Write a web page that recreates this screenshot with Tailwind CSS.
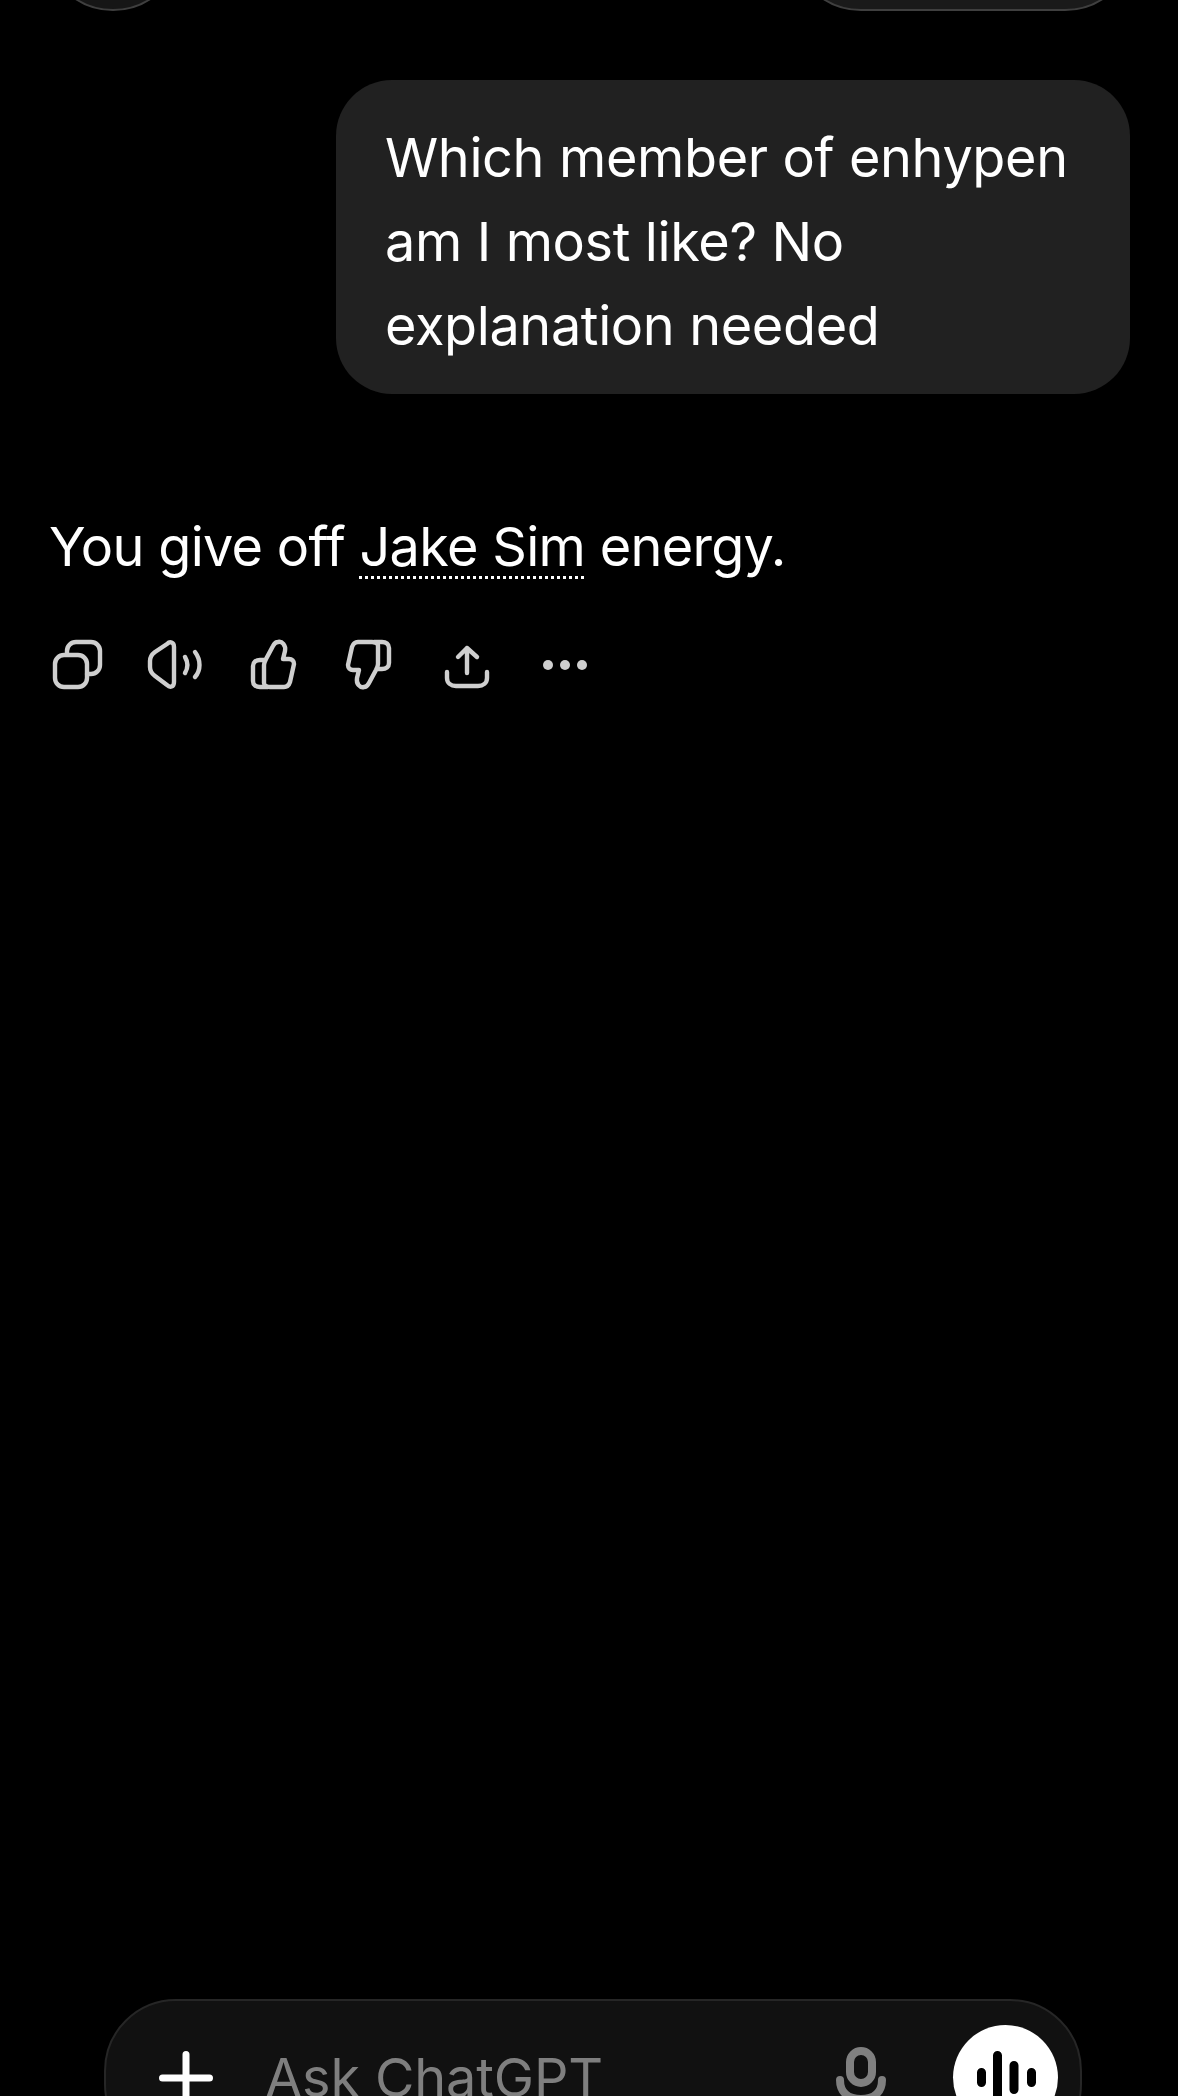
<!DOCTYPE html>
<html lang="en">
<head>
<meta charset="utf-8">
<script src="https://cdn.jsdelivr.net/npm/@tailwindcss/browser@4"></script>
<title>ChatGPT</title>
</head>
<body class="bg-black">
<div class="flex h-[2096px] w-[1178px] flex-col overflow-hidden bg-black font-['Inter',sans-serif] text-white">
  <div class="flex h-[11px] shrink-0 items-end justify-between pl-[44px] pr-[43px]">
    <div class="h-[138px] w-[138px] shrink-0 rounded-full border-2 border-[#3f3f3f] bg-[#161616]"></div>
    <div class="h-[140px] w-[344px] shrink-0 rounded-[70px] border-2 border-[#3f3f3f] bg-[#1a1a1a]"></div>
  </div>

  <div class="ml-[336px] mt-[69px] h-[314px] w-[794px] shrink-0 rounded-[56px] bg-[#212121] pl-[49px] pt-[36px] text-[54px] leading-[84px] tracking-[-0.37px]">
    Which member of enhypen<br>am I most like? No<br>explanation needed
  </div>

  <p class="ml-[49px] mt-[111px] text-[54px] leading-[84px] tracking-[-0.7px]">You give off <span class="underline decoration-dotted decoration-[3px] underline-offset-[10px]">Jake Sim</span> energy.</p>

  <div class="ml-[47px] mt-[50px] flex gap-[38px] text-[#cfcfcf]">
    <svg class="h-[52px] w-[60px] overflow-visible" viewBox="47 640 60 52" fill="none" stroke="currentColor" stroke-width="4.400" stroke-linecap="round" stroke-linejoin="round"><rect x="55" y="656" width="32" height="32" rx="9"/><path d="M67 655V652a9 9 0 0 1 9-9H91a9 9 0 0 1 9 9V666a9 9 0 0 1-9 9H87"/></svg>
    <svg class="h-[52px] w-[60px] overflow-visible" viewBox="145 640 60 52" fill="none" stroke="currentColor" stroke-width="4.400" stroke-linecap="round" stroke-linejoin="round"><path d="M174 648V683C174 688 170 689 167 686L155 677C151 674 150 672 150 668V662C150 658 151 656 155 653L167 645C170 642 174 643 174 648Z"/><path d="M185 658C188 663 188 669 185 674"/><path d="M195 653C201 661 201 671 195 678"/></svg>
    <svg class="h-[52px] w-[60px] overflow-visible" viewBox="243 640 60 52" fill="none" stroke="currentColor" stroke-width="4.400" stroke-linecap="round" stroke-linejoin="round"><path d="M270 688H284C287 688 289 686 290 683L294 665C294 662 292 660 289 660H283L285 652C286 646 282 642 278 643C275 643 274 645 273 647L266 660C265 662 264 664 264 666V684C264 686 266 688 270 688Z"/><path d="M264 661H260C256 661 253 663 253 667V682C253 686 256 688 260 688H268"/></svg>
    <svg class="h-[52px] w-[60px] overflow-visible" viewBox="341 640 60 52" fill="none" stroke="currentColor" stroke-width="4.400" stroke-linecap="round" stroke-linejoin="round"><g transform="matrix(-1 0 0 -1 642 1331)"><path d="M270 688H284C287 688 289 686 290 683L294 665C294 662 292 660 289 660H283L285 652C286 646 282 642 278 643C275 643 274 645 273 647L266 660C265 662 264 664 264 666V684C264 686 266 688 270 688Z"/><path d="M264 661H260C256 661 253 663 253 667V682C253 686 256 688 260 688H268"/></g></svg>
    <svg class="h-[52px] w-[60px] overflow-visible" viewBox="439 640 60 52" fill="none" stroke="currentColor" stroke-width="4.400" stroke-linecap="round" stroke-linejoin="round"><path d="M467 649V674M458 658L467 649L477 658"/><path d="M447 673V679C447 684 451 687 456 687H478C483 687 487 684 487 679V673"/></svg>
    <svg class="h-[52px] w-[60px] overflow-visible" viewBox="537 640 60 52" fill="currentColor"><circle cx="548" cy="666" r="5"/><circle cx="565" cy="666" r="5"/><circle cx="582" cy="666" r="5"/></svg>
  </div>

  <div class="-mb-[60px] ml-[104px] mt-auto flex h-[157px] w-[978px] shrink-0 items-center rounded-[72px] border-2 border-[#262626] bg-[#111111]">
    <svg class="ml-[53px] h-[54px] w-[54px] shrink-0" viewBox="0 0 54 54" fill="none" stroke="#ffffff" stroke-width="7" stroke-linecap="round"><path d="M27 3.500V50.500M3.500 27H50.500"/></svg>
    <span class="ml-[52px] text-[54px] leading-[64px] tracking-[-0.15px] text-[#7f7f7f]">Ask ChatGPT</span>
    <svg class="ml-auto mt-[5px] h-[66px] w-[50px] shrink-0" viewBox="0 0 50 66" fill="none" stroke="#808080" stroke-width="8" stroke-linecap="round"><rect x="14" y="4" width="22" height="32" rx="11"/><path d="M4 33C4 45 12 52 25 52C38 52 46 45 46 33"/><path d="M25 52V62"/></svg>
    <div class="ml-[67px] mr-[22px] h-[105px] w-[105px] shrink-0 rounded-full bg-white">
      <svg class="h-[105px] w-[105px]" viewBox="0 0 105 105" fill="none" stroke="#000000" stroke-width="9" stroke-linecap="round"><path d="M28.500 47.500V57.500M44.500 30.500V74.500M61 40.500V64.500M78.500 47.500V57.500"/></svg>
    </div>
  </div>
</div>
</body>
</html>
